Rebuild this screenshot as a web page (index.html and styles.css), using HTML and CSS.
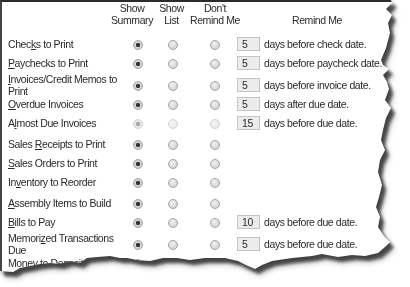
FILE: index.html
```html
<!DOCTYPE html>
<html lang="en">
<head>
    <meta charset="UTF-8">
    <title>Reminders</title>
    <link rel="stylesheet" href="styles.css">
</head>
<body>
    <div class="frame">
        <div class="sheet">
            <div class="head">
                <span></span>
                <span>Show<br>Summary</span>
                <span>Show<br>List</span>
                <span>Don't<br>Remind Me</span>
                <span class="low">Remind Me</span>
            </div>

            <div class="row">
                <span class="label">Chec<u>k</u>s to Print</span>
                <span class="radio on"></span><span class="radio"></span><span class="radio"></span>
                <span class="remind"><span class="days">5</span>days before check date.</span>
            </div>
            <div class="row">
                <span class="label"><u>P</u>aychecks to Print</span>
                <span class="radio on"></span><span class="radio"></span><span class="radio"></span>
                <span class="remind"><span class="days">5</span>days before paycheck date.</span>
            </div>
            <div class="row tall">
                <span class="label"><u>I</u>nvoices/Credit Memos to<br>Print</span>
                <span class="radio on"></span><span class="radio"></span><span class="radio"></span>
                <span class="remind"><span class="days">5</span>days before invoice date.</span>
            </div>
            <div class="row">
                <span class="label"><u>O</u>verdue Invoices</span>
                <span class="radio on"></span><span class="radio"></span><span class="radio"></span>
                <span class="remind"><span class="days">5</span>days after due date.</span>
            </div>
            <div class="row">
                <span class="label">A<u>l</u>most Due Invoices</span>
                <span class="radio dim on"></span><span class="radio dim"></span><span class="radio dim"></span>
                <span class="remind"><span class="days">15</span>days before due date.</span>
            </div>

            <div class="row gap">
                <span class="label">Sales <u>R</u>eceipts to Print</span>
                <span class="radio on"></span><span class="radio"></span><span class="radio"></span>
            </div>
            <div class="row">
                <span class="label"><u>S</u>ales Orders to Print</span>
                <span class="radio on"></span><span class="radio"></span><span class="radio"></span>
            </div>
            <div class="row">
                <span class="label">In<u>v</u>entory to Reorder</span>
                <span class="radio on"></span><span class="radio"></span><span class="radio"></span>
            </div>
            <div class="row gap">
                <span class="label"><u>A</u>ssembly Items to Build</span>
                <span class="radio on"></span><span class="radio"></span><span class="radio"></span>
            </div>
            <div class="row">
                <span class="label"><u>B</u>ills to Pay</span>
                <span class="radio on"></span><span class="radio"></span><span class="radio"></span>
                <span class="remind"><span class="days">10</span>days before due date.</span>
            </div>
            <div class="row tall">
                <span class="label">Memori<u>z</u>ed Transactions<br>Due</span>
                <span class="radio on"></span><span class="radio"></span><span class="radio"></span>
                <span class="remind"><span class="days">5</span>days before due date.</span>
            </div>
            <div class="row">
                <span class="label">Money to Deposit</span>
                <span class="radio on"></span><span class="radio"></span><span class="radio"></span>
            </div>
        </div>
    </div>
</body>
</html>
```

FILE: styles.css
```css
* {
    box-sizing: border-box;
    margin: 0;
    padding: 0;
}

body {
    background-color: #fff;
    font-family: "Liberation Sans", Arial, sans-serif;
    font-size: 10.5px;
    letter-spacing: -0.4px;
    color: #2a2a2a;
}

/* torn paper look: the clip makes the edge, the filter throws the shadow */
.frame {
    width: 404px;
    height: 284px;
    filter: drop-shadow(4px 5px 1.5px rgba(0, 0, 0, 0.6)) drop-shadow(1px 2px 2px rgba(0, 0, 0, 0.4));
}

.sheet {
    width: 400px;
    height: 280px;
    background-color: #fff;
    border-top: 2px solid #2b2b2b;
    border-left: 2px solid #444;
    padding-left: 6px;
    overflow: hidden;
    clip-path: polygon(
        0 0, 391px 0, 392px 3px, 386px 9px, 392px 15px, 388px 23px,
        390px 33px, 386px 48px, 381px 60px, 383px 65px, 389px 69px,
        383px 75px, 387px 82px, 389px 89px, 385px 100px, 391px 108px,
        386px 118px, 383px 130px, 381px 140px, 385px 150px, 380px 160px,
        378px 172px, 382px 185px, 379px 197px, 376px 207px, 380px 217px,
        378px 227px, 384px 236px, 390px 242px, 385px 247px, 378px 253px,
        365px 256px, 352px 255px, 338px 257px, 322px 254px, 312px 256px,
        292px 258px, 272px 261px, 262px 265px, 255px 269px, 248px 266px,
        238px 261px, 225px 258px, 205px 258px, 190px 260px, 177px 258px,
        163px 258px, 150px 261px, 137px 260px, 127px 258px, 120px 258px,
        110px 256px, 97px 257px, 87px 258px, 80px 263px, 70px 261px,
        60px 264px, 50px 263px, 40px 264px, 30px 266px, 20px 268px,
        13px 272px, 0 271px
    );
}

.head {
    display: grid;
    grid-template-columns: 102px 44px 35px 52px 152px;
    height: 32.5px;
    line-height: 12.4px;
    text-align: center;
}

.head .low {
    padding-top: 12.4px;
}

.row {
    display: grid;
    grid-template-columns: 116px 27px 44px 40px auto;
    align-items: center;
    height: 19px;
}

.row.tall {
    height: 22px;
    line-height: 12.1px;
}

.row.gap {
    margin-top: 2px;
}

u {
    text-decoration-thickness: 1px;
    text-underline-offset: 1px;
}

.radio {
    justify-self: center;
    width: 10px;
    height: 10px;
    margin-top: 2px;
    border-radius: 50%;
    border: 1px solid #a4a4a4;
    background: radial-gradient(circle at 40% 35%, #f0f0f0, #cbcbcb);
}

.radio.on {
    background: radial-gradient(circle, #333 0 1.8px, #d6d6d6 2.5px, #c0c0c0 100%);
}

.radio.dim {
    border-color: #d2d2d2;
    background: radial-gradient(circle at 40% 35%, #f6f6f6, #e4e4e4);
}

.radio.dim.on {
    background: radial-gradient(circle, #a8a8a8 0 1.8px, #e8e8e8 2.5px, #e0e0e0 100%);
}

.remind {
    display: flex;
    align-items: center;
    padding-left: 2px;
}

.days {
    width: 23px;
    height: 14px;
    line-height: 12px;
    padding-left: 4px;
    margin-right: 4px;
    background-color: #ececec;
    border: 1px solid #c4c4c4;
}
```
